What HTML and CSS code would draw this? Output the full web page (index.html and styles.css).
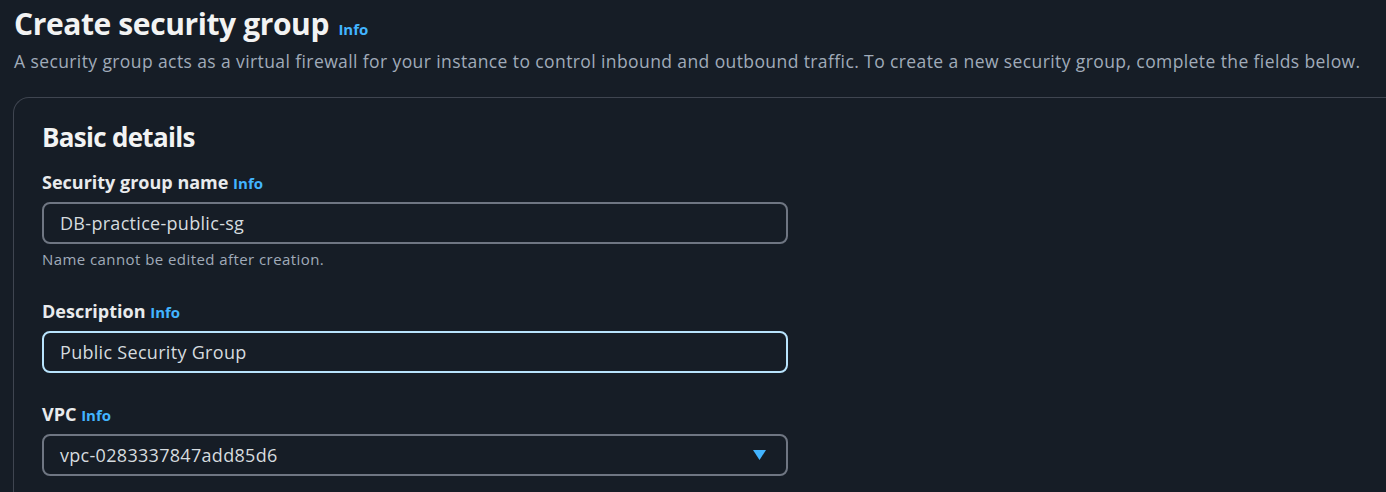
FILE: index.html
```html
<!DOCTYPE html>
<html lang="en">
<head>
<meta charset="utf-8">
<title>Create security group</title>
<link rel="stylesheet" href="styles.css">
</head>
<body>
<main class="page">
  <header class="page-header">
    <h1 class="title">Create security group <a class="info title-info" href="#">Info</a></h1>
    <p class="lead">A security group acts as a virtual firewall for your instance to control inbound and outbound traffic. To create a new security group, complete the fields below.</p>
  </header>
  <section class="container">
    <h2 class="section-title">Basic details</h2>
    <div class="field field-name">
      <label class="label">Security group name <a class="info" href="#">Info</a></label>
      <div class="input">DB-practice-public-sg</div>
      <p class="hint">Name cannot be edited after creation.</p>
    </div>
    <div class="field field-desc">
      <label class="label">Description <a class="info" href="#">Info</a></label>
      <div class="input input-focus">Public Security Group</div>
    </div>
    <div class="field field-vpc">
      <label class="label">VPC <a class="info" href="#">Info</a></label>
      <div class="input select">
        <span>vpc-0283337847add85d6</span>
        <svg class="caret" width="13" height="10" viewBox="0 0 13 10"><path d="M0 0 H13 L6.5 10 Z" fill="#42b4ff"/></svg>
      </div>
    </div>
  </section>
</main>
</body>
</html>
```

FILE: styles.css
```css
html, body {
  margin: 0;
  padding: 0;
  background: #161d26;
  height: 100%;
  overflow: hidden;
}
body {
  font-family: "Open Sans", "Noto Sans", sans-serif;
  color: #e9ebed;
}
.page {
  padding: 0 0 0 13px;
}
.page-header {
  padding-left: 1px;
}
.title {
  margin: 0;
  padding-top: 6px;
  font-size: 30px;
  line-height: 36px;
  font-weight: 700;
  color: #f2f3f3;
  letter-spacing: -0.4px;
}
.info {
  color: #42b4ff;
  font-size: 15px;
  font-weight: 700;
  text-decoration: none;
  letter-spacing: 0;
}
.title-info {
  margin-left: 2px;
}
.lead {
  margin: 2px 0 0 0;
  font-size: 17.5px;
  line-height: 24px;
  letter-spacing: 0.4px;
  color: #a0abb9;
  white-space: nowrap;
}
.container {
  margin-top: 24px;
  border: 1px solid #3f4550;
  border-right: none;
  border-bottom: none;
  border-radius: 16px 0 0 0;
  padding: 23px 0 0 28px;
  height: 400px;
}
.section-title {
  margin: 0;
  font-size: 26px;
  line-height: 32px;
  font-weight: 700;
  color: #f2f3f3;
  letter-spacing: -0.7px;
}
.field {
  width: 746px;
}
.label {
  display: block;
  font-size: 18px;
  line-height: 22px;
  font-weight: 700;
  color: #e9ebed;
}
.input {
  box-sizing: border-box;
  height: 42px;
  margin-top: 8px;
  border: 2px solid #6f7682;
  border-radius: 8px;
  padding: 0 16px;
  font-size: 18px;
  letter-spacing: 0.3px;
  color: #d5dbdf;
  display: flex;
  align-items: center;
}
.field-name {
  margin-top: 18px;
}
.hint {
  margin: 5px 0 0 0;
  font-size: 15px;
  line-height: 20px;
  letter-spacing: 0.43px;
  color: #a0abb9;
}
.field-desc {
  margin-top: 31px;
}
.input-focus {
  border-color: #b8e3fc;
}
.field-vpc {
  margin-top: 30px;
}
.select {
  justify-content: space-between;
}
.caret {
  margin-right: 4px;
}
```
